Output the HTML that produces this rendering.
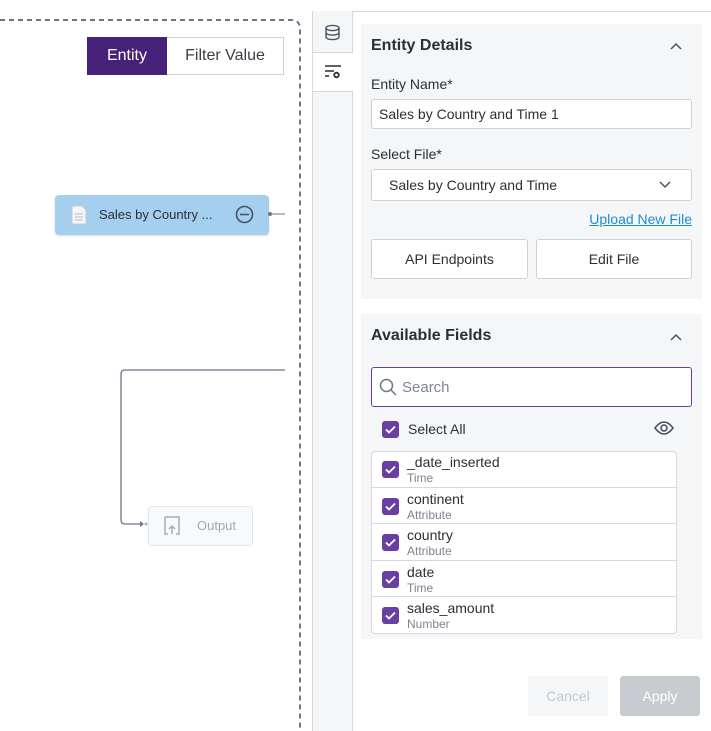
<!DOCTYPE html>
<html style="width:711px;height:731px;overflow:hidden"><head><style>
*{box-sizing:border-box;margin:0;padding:0}
body{width:711px;height:731px;overflow:hidden;background:#fff;font-family:"Liberation Sans",sans-serif;color:#2b2f36;position:relative}
.a{position:absolute}
.panel{background:#f5f6f8}
.inp{background:#fff;border:1px solid #cdd1d6;border-radius:3px;font-size:14px;padding-left:7px;display:flex;align-items:center}
.btn{background:#fff;border:1px solid #cdd1d6;border-radius:3px;font-size:14px;display:flex;align-items:center;justify-content:center}
.cb{width:17px;height:17px;background:#6a3fa3;border-radius:3px}
.cb svg{display:block}
.row{position:absolute;left:0;width:305px;border-top:1px solid #d5d8dc;height:36px}
.row .cb{position:absolute;left:10px;top:10px}
.row .n{position:absolute;left:35px;top:3px;font-size:14px}
.row .t{position:absolute;left:35px;top:20px;font-size:12px;color:#7d8590}
</style></head><body>
<div class="a" style="left:0;top:0;width:711px;height:731px;overflow:hidden">
<svg class="a" style="left:0;top:0" width="302" height="731"><path d="M0 20H291q9 0 9 9V731" fill="none" stroke="#6c7686" stroke-width="2" stroke-dasharray="5 4"/></svg>
</div>
<div class="a" style="left:87px;top:37px;width:80px;height:38px;background:#47207a;color:#fff;font-size:16px;display:flex;align-items:center;justify-content:center">Entity</div>
<div class="a" style="left:167px;top:37px;width:117px;height:38px;border:1px solid #cdd1d6;border-left:none;font-size:16px;color:#3b3f46;display:flex;align-items:center;justify-content:center">Filter Value</div>
<div class="a" style="left:55px;top:195px;width:214px;height:40px;background:#a5cfee;border-radius:4px;box-shadow:0 1px 2px rgba(0,0,0,.15)"></div>
<svg class="a" style="left:71px;top:205px" width="16" height="20"><path d="M1 1h10l4 4v14H1z" fill="#f4f5f6" stroke="#c8ccd0"/><path d="M4 9h8M4 12h8M4 15h8" stroke="#b9bdc2"/></svg>
<div class="a" style="left:99px;top:207px;font-size:13px;color:#2b2f36">Sales by Country ...</div>
<svg class="a" style="left:235px;top:205px" width="19" height="19"><circle cx="9.5" cy="9.5" r="8" fill="none" stroke="#4a5260" stroke-width="1.6"/><path d="M5 9.5h9" stroke="#4a5260" stroke-width="1.6"/></svg>
<svg class="a" style="left:0;top:0" width="300" height="731"><circle cx="270" cy="214" r="2" fill="#6c7686"/><path d="M272 214h13" stroke="#6c7686"/><path d="M285 370H125q-4 0-4 4v146q0 4 4 4h18" fill="none" stroke="#6c7686" stroke-width="1.3"/><path d="M140 521l4 3-4 3z" fill="#6c7686"/><circle cx="146" cy="524" r="1.5" fill="#aab"/></svg>
<div class="a" style="left:148px;top:506px;width:105px;height:40px;background:#f7fafd;border:1px solid #e3e7ec;border-radius:4px"></div>
<svg class="a" style="left:163px;top:516px" width="18" height="19"><path d="M2 1h14v17h-3M5 18H2V1" fill="none" stroke="#a4abb5" stroke-width="1.4"/><path d="M9 18V10M6 13l3-3 3 3" fill="none" stroke="#a4abb5" stroke-width="1.4"/></svg>
<div class="a" style="left:197px;top:518px;font-size:13px;color:#a1a8b2">Output</div>
<div class="a" style="left:312px;top:11px;width:399px;border-top:1px solid #d5d9de"></div>
<div class="a" style="left:312px;top:11px;width:41px;height:720px;background:#f5f6f8;border-left:1px solid #d5d9de;border-right:1px solid #d5d9de"></div>
<div class="a" style="left:312px;top:52px;width:41px;height:40px;background:#fff;border-top:1px solid #d5d9de;border-bottom:1px solid #d5d9de;border-left:1px solid #d5d9de"></div>
<svg class="a" style="left:324px;top:24px" width="17" height="17"><ellipse cx="8.5" cy="4" rx="6.5" ry="2.6" fill="none" stroke="#4a5260" stroke-width="1.4"/><path d="M2 4v9c0 1.5 3 2.6 6.5 2.6S15 14.5 15 13V4M2 8.5c0 1.5 3 2.6 6.5 2.6S15 10 15 8.5" fill="none" stroke="#4a5260" stroke-width="1.4"/></svg>
<svg class="a" style="left:324px;top:64px" width="18" height="15"><path d="M1 2h16M1 7h9M1 12h4" stroke="#2b2f36" stroke-width="1.4"/><circle cx="12.5" cy="11" r="2.3" fill="none" stroke="#2b2f36" stroke-width="1.8"/></svg>
<div class="a panel" style="left:361px;top:24px;width:341px;height:275px"></div>
<div class="a" style="left:371px;top:37px;font-size:16px;font-weight:bold">Entity Details</div>
<svg class="a" style="left:670px;top:42px" width="12" height="8"><path d="M1 7l5-5 5 5" fill="none" stroke="#4a5260" stroke-width="1.5"/></svg>
<div class="a" style="left:371px;top:76px;font-size:14px">Entity Name*</div>
<div class="a inp" style="left:371px;top:99px;width:321px;height:30px">Sales by Country and Time 1</div>
<div class="a" style="left:371px;top:146px;font-size:14px">Select File*</div>
<div class="a inp" style="left:371px;top:169px;width:321px;height:32px;padding-left:17px">Sales by Country and Time</div>
<svg class="a" style="left:659px;top:181px" width="12" height="8"><path d="M1 1l5 5 5-5" fill="none" stroke="#4a5260" stroke-width="1.5"/></svg>
<div class="a" style="right:19px;top:211px;font-size:14px;color:#1c8ed0;text-decoration:underline">Upload New File</div>
<div class="a btn" style="left:371px;top:239px;width:157px;height:40px">API Endpoints</div>
<div class="a btn" style="left:536px;top:239px;width:156px;height:40px">Edit File</div>
<div class="a panel" style="left:361px;top:314px;width:341px;height:325px"></div>
<div class="a" style="left:371px;top:327px;font-size:16px;font-weight:bold">Available Fields</div>
<svg class="a" style="left:670px;top:333px" width="12" height="8"><path d="M1 7l5-5 5 5" fill="none" stroke="#4a5260" stroke-width="1.5"/></svg>
<div class="a inp" style="left:371px;top:367px;width:321px;height:40px;border-color:#6a3fa3;padding-left:30px;color:#7d8590;font-size:15px">Search</div>
<svg class="a" style="left:379px;top:378px" width="18" height="18"><circle cx="7.5" cy="7.5" r="6" fill="none" stroke="#6c7686" stroke-width="1.5"/><path d="M12 12l5 5" stroke="#6c7686" stroke-width="1.5"/></svg>
<div class="a cb" style="left:382px;top:421px"><svg width="17" height="17"><path d="M4 8.5l3 3 6-6" fill="none" stroke="#fff" stroke-width="1.8"/></svg></div>
<div class="a" style="left:408px;top:421px;font-size:14px">Select All</div>
<svg class="a" style="left:654px;top:420px" width="20" height="16"><path d="M1 8q9-12 18 0q-9 12-18 0z" fill="none" stroke="#4a5260" stroke-width="1.6"/><circle cx="10" cy="8" r="3" fill="none" stroke="#4a5260" stroke-width="1.6"/></svg>
<div class="a" style="left:371px;top:451px;width:306px;height:183px;background:#fff;border:1px solid #d5d8dc;border-radius:4px;overflow:hidden">
<div class="row" style="top:-1px;border-top:none"><div class="cb"><svg width="17" height="17"><path d="M4 8.5l3 3 6-6" fill="none" stroke="#fff" stroke-width="1.8"/></svg></div><div class="n">_date_inserted</div><div class="t">Time</div></div>
<div class="row" style="top:35px"><div class="cb"><svg width="17" height="17"><path d="M4 8.5l3 3 6-6" fill="none" stroke="#fff" stroke-width="1.8"/></svg></div><div class="n">continent</div><div class="t">Attribute</div></div>
<div class="row" style="top:71px"><div class="cb"><svg width="17" height="17"><path d="M4 8.5l3 3 6-6" fill="none" stroke="#fff" stroke-width="1.8"/></svg></div><div class="n">country</div><div class="t">Attribute</div></div>
<div class="row" style="top:108px"><div class="cb"><svg width="17" height="17"><path d="M4 8.5l3 3 6-6" fill="none" stroke="#fff" stroke-width="1.8"/></svg></div><div class="n">date</div><div class="t">Time</div></div>
<div class="row" style="top:144px"><div class="cb"><svg width="17" height="17"><path d="M4 8.5l3 3 6-6" fill="none" stroke="#fff" stroke-width="1.8"/></svg></div><div class="n">sales_amount</div><div class="t">Number</div></div>
</div>
<div class="a" style="left:528px;top:676px;width:80px;height:40px;background:#f5f6f8;border-radius:3px;color:#c3c7cc;font-size:14px;display:flex;align-items:center;justify-content:center">Cancel</div>
<div class="a" style="left:620px;top:676px;width:80px;height:40px;background:#c8ccd0;border-radius:3px;color:#fff;font-size:14px;display:flex;align-items:center;justify-content:center">Apply</div>
</body></html>
